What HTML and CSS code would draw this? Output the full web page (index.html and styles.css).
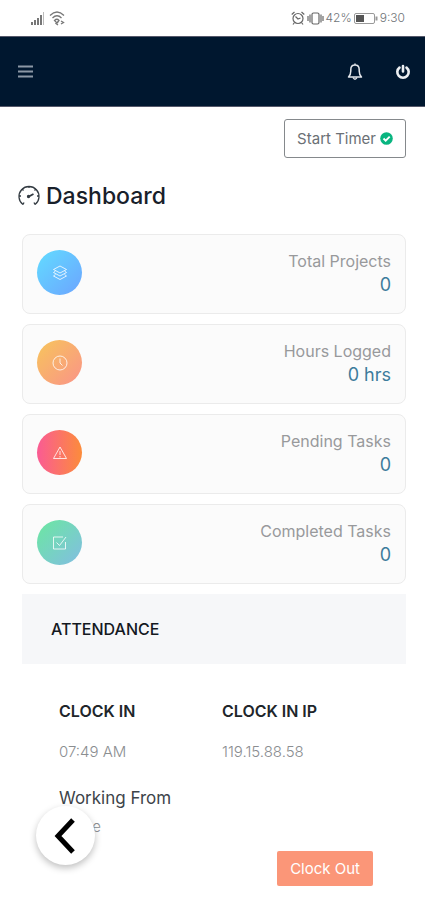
FILE: index.html
```html
<!DOCTYPE html>
<html lang="en">
<head>
    <meta charset="UTF-8">
    <meta name="viewport" content="width=device-width, initial-scale=1.0">
    <title>Dashboard</title>
    <link rel="stylesheet" href="styles.css">
</head>
<body>
    <div class="status">
        <div class="status-side">
            <svg width="14" height="13" viewBox="0 0 14 13" fill="#777">
                <path d="M0 10h2v3H0zM3 8h2v5H3zM6 6h2v7H6zM9 3h2v10H9z"/>
                <path d="M12 0h1v13h-1z" fill="#bbb"/>
            </svg>
            <svg width="16" height="15" viewBox="0 0 16 15" fill="none" stroke="#777" stroke-width="1.3">
                <path d="M1 4.500Q8-2.500 15 4.500M3.500 7Q8 2.500 12.500 7M5.500 9.500Q8 7 10 9.500L8 12z"/>
                <path d="M9 11l-2 1.500L9 14M12 10l2.500 1.500L12 13"/>
            </svg>
        </div>
        <div class="status-side right">
            <svg width="14" height="14" viewBox="0 0 14 14" fill="none" stroke="#666" stroke-width="1.2">
                <circle cx="7" cy="7.500" r="5"/>
                <path d="M.7 3.500L3.500 1M13.300 3.500L10.500 1M4.500 5.500L7 8l2.500-1M3.500 11.500L2 13.500M10.500 11.500l1.500 2"/>
            </svg>
            <svg width="17" height="13" viewBox="0 0 17 13" fill="none" stroke="#666" stroke-width="1.2">
                <rect x="5" y="1" width="7" height="11" rx="1.500"/>
                <path d="M3 2.500v8M14 2.500v8M1 4v5M16 4v5"/>
            </svg>
            <span>42%</span>
            <svg class="battery" width="24" height="11" viewBox="0 0 24 11" fill="none" stroke="#999">
                <rect x=".5" y=".5" width="20" height="10" rx="1.500"/>
                <path d="M22.500 3.500v4" stroke-width="2"/>
                <path d="M2 2h8v7H2z" fill="#555" stroke="none"/>
            </svg>
            <span>9:30</span>
        </div>
    </div>

    <header class="navbar">
        <button class="icon-btn" aria-label="Menu">
            <svg width="16" height="13" viewBox="0 0 16 13" stroke="#8c98a6" stroke-width="2">
                <path d="M0 1.500h15M0 6.500h15M0 11.500h15"/>
            </svg>
        </button>
        <div class="nav-right">
            <button class="icon-btn" aria-label="Notifications">
                <svg width="16" height="18" viewBox="0 0 16 18" fill="none" stroke="#e4e7eb" stroke-width="1.500" stroke-linejoin="round">
                    <path d="M8 .5v1.500M1.500 14Q3.800 12 3.800 8V6.500Q3.800 2 8 2t4.200 4.500V8q0 4 2.300 6z"/>
                    <path d="M6 14.500Q8 18 10 14.500"/>
                </svg>
            </button>
            <button class="icon-btn" aria-label="Log out">
                <svg width="16" height="16" viewBox="0 0 16 16" fill="none" stroke="#eceff2" stroke-width="2.600" stroke-linecap="round">
                    <path d="M4.500 3.600A5.700 5.700 0 1 0 11.500 3.600M8 2v5.500"/>
                </svg>
            </button>
        </div>
    </header>

    <main>
        <div class="timer-row">
            <button class="timer">Start Timer
                <svg width="13" height="13" viewBox="0 0 13 13">
                    <circle cx="6.500" cy="6.500" r="6.300" fill="#09b580"/>
                    <path d="M3.500 6.500l2.200 2.200 4-4" fill="none" stroke="#fff" stroke-width="1.900"/>
                </svg>
            </button>
        </div>

        <h1>
            <svg width="24" height="24" viewBox="0 0 24 24" fill="none" stroke="#333b42" stroke-width="1.300">
                <path d="M6 20.500A10 10 0 1 1 18 20.500"/>
                <path d="M12 2v2M2 12h2M20 12h2M5 5l1.500 1.500M19 5l-1.500 1.500M6 20.500l1-2M18 20.500l-1-2"/>
                <path d="M11 13l5.500-3" stroke-width="1.700"/>
                <circle cx="11.500" cy="12.500" r="1" fill="#333b42"/>
            </svg>
            Dashboard
        </h1>

        <section class="cards">
            <div class="card">
                <div class="circle blue">
                    <svg width="16" height="16" viewBox="0 0 16 16">
                        <path d="M8 1l6.500 3.500L8 8 1.500 4.500zM3.500 6l-2 1.500L8 11l6.500-3.500-2-1.500M3.500 9.500l-2 1.500L8 14.500l6.500-3.500-2-1.500"/>
                    </svg>
                </div>
                <div class="info">
                    <h2>Total Projects</h2>
                    <p>0</p>
                </div>
            </div>
            <div class="card">
                <div class="circle orange">
                    <svg width="16" height="16" viewBox="0 0 16 16">
                        <circle cx="8" cy="8" r="7"/>
                        <path d="M8 3.500V8l2.500 2.500"/>
                    </svg>
                </div>
                <div class="info">
                    <h2>Hours Logged</h2>
                    <p>0 hrs</p>
                </div>
            </div>
            <div class="card">
                <div class="circle red">
                    <svg width="16" height="16" viewBox="0 0 16 16">
                        <path d="M8 2l6.500 11.500h-13zM8 6v4M8 11v1.500"/>
                    </svg>
                </div>
                <div class="info">
                    <h2>Pending Tasks</h2>
                    <p>0</p>
                </div>
            </div>
            <div class="card">
                <div class="circle green">
                    <svg width="16" height="16" viewBox="0 0 16 16">
                        <path d="M11 2H1.500v12h12V7M4.500 7.500l3 3L14 2"/>
                    </svg>
                </div>
                <div class="info">
                    <h2>Completed Tasks</h2>
                    <p>0</p>
                </div>
            </div>
        </section>

        <section class="attendance">
            <h2 class="panel-head">ATTENDANCE</h2>
            <div class="panel-body">
                <div class="clock">
                    <div>
                        <h3>CLOCK IN</h3>
                        <p>07:49 AM</p>
                    </div>
                    <div>
                        <h3>CLOCK IN IP</h3>
                        <p>119.15.88.58</p>
                    </div>
                </div>
                <div class="working">
                    <h4>Working From</h4>
                    <p>Office</p>
                </div>
                <div class="actions">
                    <button class="clock-out">Clock Out</button>
                </div>
            </div>
        </section>
    </main>

    <button class="back" aria-label="Back">
        <svg width="24" height="36" viewBox="0 0 24 36" fill="none" stroke="#000" stroke-width="5">
            <path d="M19 2L4 18l15 16"/>
        </svg>
    </button>
</body>
</html>
```
FILE: styles.css
```css
*{
    margin: 0;
    padding: 0;
    box-sizing: border-box;
}
body{
    background: #fff;
    color: #6f7478;
    font-family: Inter, "Open Sans", sans-serif;
    font-size: 15px;
    line-height: 24px;
}
button{
    font-family: inherit;
    font-size: 15px;
    cursor: pointer;
}
svg{
    display: block;
}
.status{
    display: flex;
    justify-content: space-between;
    align-items: center;
    height: 36px;
    padding: 0 20px 0 31px;
    font-size: 12px;
    font-weight: 300;
}
.status-side{
    display: flex;
    align-items: center;
    gap: 4px;
}
.status-side.right{
    gap: 2px;
}
.navbar{
    display: flex;
    justify-content: space-between;
    align-items: center;
    height: 71px;
    padding: 0 14px 0 18px;
    background: #00172f;
    border-top: 1px solid #55586a;
    border-bottom: 1px solid #55586a;
}
.nav-right{
    display: flex;
    gap: 32px;
}
.icon-btn{
    display: flex;
    align-items: center;
    background: none;
    border: none;
}
.timer-row{
    display: flex;
    justify-content: flex-end;
    padding: 12px 19px 0;
}
.timer{
    display: flex;
    align-items: center;
    gap: 4px;
    height: 39px;
    padding: 0 12px;
    background: #fff;
    border: 1px solid #85898c;
    border-radius: 3px;
    color: #6b7075;
}
h1{
    display: flex;
    align-items: center;
    gap: 5px;
    padding: 22px 17px;
    color: #18202a;
    font-size: 23px;
    font-weight: 500;
    line-height: 32px;
}
.cards{
    display: flex;
    flex-direction: column;
    gap: 10px;
    padding: 0 19px 10px 22px;
}
.card{
    display: flex;
    justify-content: space-between;
    align-items: flex-start;
    height: 80px;
    padding: 14px;
    background: #fbfbfb;
    border: 1px solid #ebebeb;
    border-radius: 8px;
}
.circle{
    display: flex;
    justify-content: center;
    align-items: center;
    width: 45px;
    height: 45px;
    margin-top: 1px;
    border-radius: 50%;
}
.circle svg{
    fill: none;
    stroke: #fff;
    stroke-opacity: .8;
}
.blue{
    background: linear-gradient(135deg, #62dcff, #6ca4ff);
}
.orange{
    background: linear-gradient(135deg, #f7c55b, #fa9388);
}
.red{
    background: linear-gradient(90deg, #fa5b94, #fc8c3b);
}
.green{
    background: linear-gradient(135deg, #6be8a0, #82bde3);
}
.info{
    text-align: right;
}
.info h2{
    color: #98999b;
    font-size: 16px;
    font-weight: 400;
    line-height: 24px;
}
.info p{
    color: #3d7b9c;
    font-size: 18px;
    line-height: 24px;
}
.attendance{
    padding: 0 19px 0 22px;
}
.panel-head{
    padding: 23px 29px;
    background: #f6f7f9;
    color: #14191f;
    font-size: 16px;
    font-weight: 500;
    line-height: 24px;
}
.panel-body{
    padding: 35px 33px 14px 37px;
}
.clock{
    display: grid;
    grid-template-columns: 1fr 1fr;
    gap: 12px;
}
.clock h3{
    margin-bottom: 17px;
    color: #20252a;
    font-size: 16px;
    font-weight: 600;
    line-height: 24px;
}
.clock p,
.working p{
    color: #8b8e91;
    font-weight: 300;
}
.working{
    padding-top: 22px;
}
.working h4{
    margin-bottom: 5px;
    color: #3d444a;
    font-size: 17px;
    font-weight: 400;
    line-height: 24px;
}
.actions{
    display: flex;
    justify-content: flex-end;
    padding-top: 12px;
}
.clock-out{
    height: 35px;
    padding: 0 13px;
    background: #fb9678;
    border: none;
    border-radius: 2px;
    color: #fff;
}
/* floating back button, stays over the page */
.back{
    position: fixed;
    left: 36px;
    bottom: 35px;
    display: flex;
    justify-content: center;
    align-items: center;
    width: 59px;
    height: 59px;
    background: #fff;
    border: none;
    border-radius: 50%;
    box-shadow: 0 3px 7px rgba(0,0,0,.25);
}
```
